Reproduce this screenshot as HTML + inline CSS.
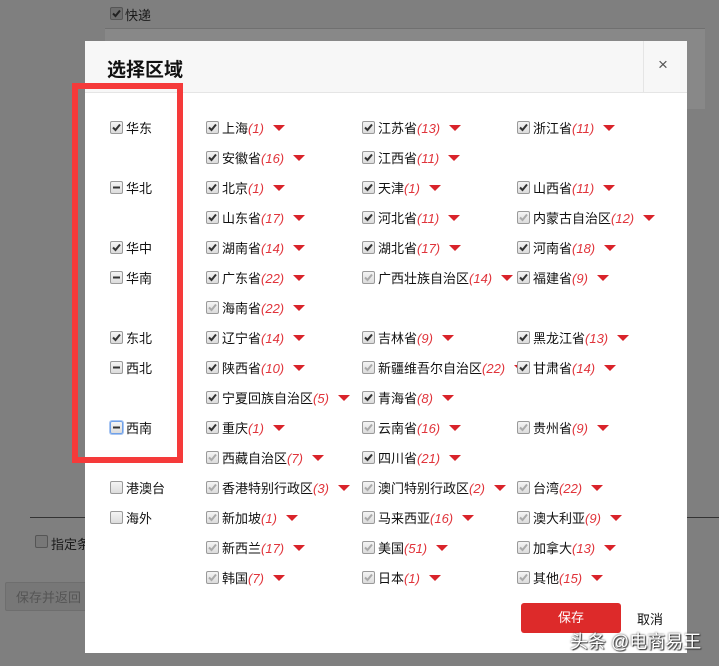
<!DOCTYPE html>
<html><head><meta charset="utf-8"><style>
body{margin:0;width:719px;height:666px;background:#7f7f7f;position:relative;overflow:hidden;font-family:"Liberation Sans","Noto Sans CJK SC",sans-serif;font-size:13px;color:#111}
.a{position:absolute;white-space:nowrap}
.cb{position:absolute;width:11px;height:11px;border:1px solid #9a9a9a;border-radius:2px;background:linear-gradient(#f4f4f4,#dcdcdc)}
.cb svg{position:absolute;left:1px;top:1px}
.it{position:absolute;height:16px;line-height:16px;white-space:nowrap}
.it .t{position:absolute;left:16px;top:0}
.n{color:#e0333a;font-style:italic}
.tri{display:inline-block;width:0;height:0;border-left:6px solid transparent;border-right:6px solid transparent;border-top:6px solid #d9232a;margin-left:9px;vertical-align:2px}
</style></head><body>
<!-- background page -->
<div class="cb" style="left:110px;top:7px;background:#6e6e6e;border-color:#555"><svg width="9" height="9"><path d="M1 4.5L3.5 7L8 1.5" stroke="#222" stroke-width="2" fill="none"/></svg></div>
<div class="a" style="left:125px;top:5px;color:#1a1a1a">快递</div>
<div class="a" style="left:105px;top:28px;width:600px;height:80px;background:#888;border-top:1px solid #707070"></div>
<div class="a" style="left:30px;top:517px;width:60px;height:1px;background:#333"></div>
<div class="a" style="left:687px;top:517px;width:40px;height:1px;background:#333"></div>
<div class="cb" style="left:35px;top:535px;background:#777;border-color:#555"></div>
<div class="a" style="left:51px;top:534px;color:#1a1a1a">指定条件包邮</div>
<div class="a" style="left:5px;top:582px;width:90px;height:29px;background:#777;border:1px solid #6e6e6e;border-radius:2px;color:#555;line-height:29px;padding-left:10px;box-sizing:border-box">保存并返回</div>
<!-- modal -->
<div class="a" style="left:85px;top:41px;width:602px;height:612px;background:#fff"></div>
<div class="a" style="left:85px;top:41px;width:602px;height:51px;background:#f7f7f7;border-bottom:1px solid #e5e5e5"></div>
<div class="a" style="left:643px;top:41px;width:1px;height:51px;background:#e5e5e5"></div>
<div class="a" style="left:107px;top:55px;font-size:19px;font-weight:bold;color:#111">选择区域</div>
<div class="a" style="left:658px;top:55px;font-size:17px;color:#555">×</div>
<div class="a" style="left:72px;top:83px;width:99px;height:368px;border:6px solid #f53a3a"></div>
<div id="c"></div>
<div class="a" style="left:521px;top:603px;width:100px;height:30px;background:#dd2a2a;border-radius:3px;color:#fff;text-align:center;line-height:30px">保存</div>
<div class="a" style="left:637px;top:609px;color:#111">取消</div>
<div class="a" style="left:570px;top:628px;font-size:18px;color:#fff;text-shadow:0 0 2px #333,1px 1px 1px #333">头条 @电商易王</div>
<script>
const rows=[
[127,['华东',1],[['上海',1,1],['江苏省',13,1],['浙江省',11,1]]],
[157,null,[['安徽省',16,1],['江西省',11,1]]],
[187,['华北',2],[['北京',1,1],['天津',1,1],['山西省',11,1]]],
[217,null,[['山东省',17,1],['河北省',11,1],['内蒙古自治区',12,0]]],
[247,['华中',1],[['湖南省',14,1],['湖北省',17,1],['河南省',18,1]]],
[277,['华南',2],[['广东省',22,1],['广西壮族自治区',14,0],['福建省',9,1]]],
[307,null,[['海南省',22,0]]],
[337,['东北',1],[['辽宁省',14,1],['吉林省',9,1],['黑龙江省',13,1]]],
[367,['西北',2],[['陕西省',10,1],['新疆维吾尔自治区',22,0],['甘肃省',14,1]]],
[397,null,[['宁夏回族自治区',5,1],['青海省',8,1]]],
[427,['西南',3],[['重庆',1,1],['云南省',16,0],['贵州省',9,0]]],
[457,null,[['西藏自治区',7,0],['四川省',21,1]]],
[487,['港澳台',0],[['香港特别行政区',3,0],['澳门特别行政区',2,0],['台湾',22,0]]],
[517,['海外',0],[['新加坡',1,0],['马来西亚',16,0],['澳大利亚',9,0]]],
[547,null,[['新西兰',17,0],['美国',51,0],['加拿大',13,0]]],
[577,null,[['韩国',7,0],['日本',1,0],['其他',15,0]]]];
function cb(x,y,s){let b='<div class="cb" style="left:'+x+'px;top:'+(y-6)+'px'+(s==3?';border-color:#6fa0e8;box-shadow:0 0 0 1px #a9c6f2':'')+'">';
if(s==1||s==4)b+='<svg width="9" height="9"><path d="M1 4.5L3.5 7L8 1.5" stroke="'+(s==1?'#333':'#aaa')+'" stroke-width="2" fill="none"/></svg>';
if(s==2||s==3)b+='<svg width="9" height="9"><rect x="1" y="3.5" width="7" height="2" fill="#333"/></svg>';
return b+'</div>';}
let h='';const xs=[206,362,517];
rows.forEach(r=>{const y=r[0];
if(r[1]){h+=cb(110,y,r[1][1]);h+='<div class="a" style="left:126px;top:'+(y-9)+'px">'+r[1][0]+'</div>';}
r[2].forEach((it,i)=>{h+=cb(xs[i],y,it[2]?1:4);h+='<div class="a" style="left:'+(xs[i]+16)+'px;top:'+(y-9)+'px">'+it[0]+'<span class="n">('+it[1]+')</span><span class="tri"></span></div>';});});
document.getElementById('c').innerHTML=h;
</script>
</body></html>
